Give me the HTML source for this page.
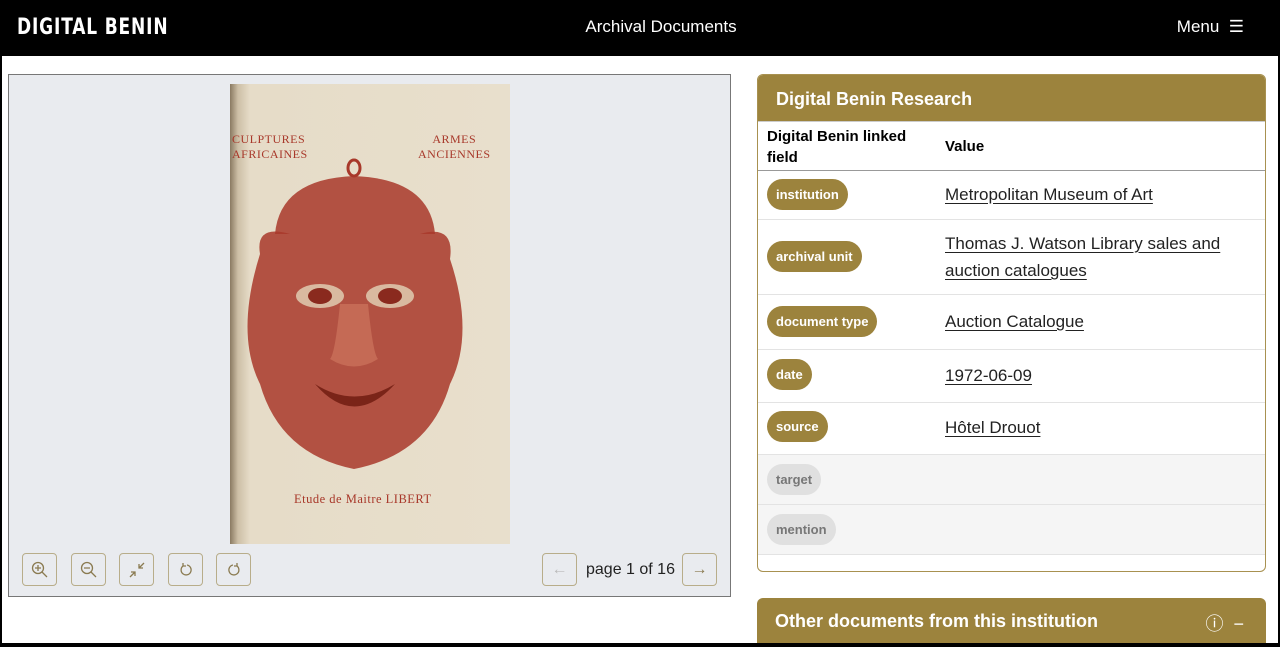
<!DOCTYPE html>
<html><head><meta charset="utf-8"><style>
*{box-sizing:border-box;margin:0;padding:0}
html,body{width:1280px;height:647px;overflow:hidden}
body{background:#000;font-family:"Liberation Sans",sans-serif;position:relative}
.page{position:absolute;left:2px;top:56px;width:1276px;height:587px;background:#fff}
.nav{position:absolute;left:0;top:0;width:1280px;height:56px;background:#000;color:#fff}
.logo{position:absolute;left:17px;top:15px;font-weight:bold;font-size:22px;letter-spacing:1px;font-family:"DejaVu Sans Condensed","Liberation Sans",sans-serif;transform:scaleX(.86);transform-origin:left}
.title{position:absolute;left:0;width:1322px;text-align:center;top:17px;font-size:17px}
.menu{position:absolute;right:36px;top:17px;font-size:17px}
.viewer{position:absolute;left:8px;top:74px;width:723px;height:523px;background:#e9ebef;border:1px solid #777}
.img{position:absolute;left:221px;top:9px;width:280px;height:460px;background:linear-gradient(90deg,#8a7a62 0,#cdbfa6 8px,#e6dcc8 20px,#e8dfcc 100%)}
.img span{position:absolute;color:#a8382a;font-family:"Liberation Serif",serif;font-size:12px;letter-spacing:.5px}
.btn{position:absolute;top:478px;width:35px;height:33px;border:1px solid #b8ad8a;border-radius:4px;display:flex;align-items:center;justify-content:center}
.card{position:absolute;left:757px;top:74px;width:509px;height:498px;border:1px solid #a89150;border-radius:6px;overflow:hidden}
.ch{height:46px;background:#9c833d;color:#fff;font-weight:bold;font-size:18px;padding:14px 18px}
.row{position:absolute;left:0;width:507px;border-bottom:1px solid #e3e3e3}
.pill{position:absolute;left:9px;background:#9c833d;color:#fff;font-weight:bold;font-size:13px;padding:8px 9px;border-radius:16px}
.pill.g{background:#e0e0e0;color:#777}
.val{position:absolute;left:187px;font-size:17px;color:#222;text-decoration:underline;text-underline-offset:3px;line-height:27px}
.card2{position:absolute;left:757px;top:598px;width:509px;height:45px;background:#9c833d;border-radius:6px 6px 0 0;color:#fff;font-weight:bold;font-size:18px;padding:13px 18px}
</style></head><body>
<div class="nav"><div class="logo">DIGITAL BENIN</div><div class="title">Archival Documents</div><div class="menu">Menu &nbsp;☰</div></div>
<div class="page"></div>
<div class="viewer">
<div class="img">
<span style="left:2px;top:48px">CULPTURES<br>AFRICAINES</span>
<span style="left:188px;top:48px;text-align:center">ARMES<br>ANCIENNES</span>
<svg style="position:absolute;left:0;top:0" width="280" height="460">
<ellipse cx="124" cy="84" rx="6" ry="8" fill="none" stroke="#a8382a" stroke-width="3"/>
<path d="M45 150 Q50 95 124 92 Q200 95 205 150 Z" fill="#a8382a" opacity=".85"/>
<path d="M30 170 Q25 140 60 150 L190 150 Q225 140 220 175 Q245 250 220 300 Q200 370 124 385 Q50 370 30 300 Q5 250 30 170Z" fill="#a8382a" opacity=".85"/>
<ellipse cx="90" cy="212" rx="24" ry="12" fill="#d9b9a0"/>
<ellipse cx="160" cy="212" rx="24" ry="12" fill="#d9b9a0"/>
<ellipse cx="90" cy="212" rx="12" ry="8" fill="#8a2a1e"/>
<ellipse cx="160" cy="212" rx="12" ry="8" fill="#8a2a1e"/>
<path d="M110 220 Q105 270 100 275 Q124 290 148 275 Q143 270 138 220Z" fill="#c56a55"/>
<path d="M85 300 Q124 325 165 300 Q124 345 85 300Z" fill="#7a2418"/>
</svg>
<span style="left:64px;top:408px;font-size:12.5px">Etude de Maitre LIBERT</span>
</div>
<div class="btn" style="left:13px"><svg width="18" height="18" fill="none" stroke="#8a7a50" stroke-width="1.3"><circle cx="7" cy="7" r="5.5"/><path d="M11 11l5 5M7 4v6M4 7h6"/></svg></div>
<div class="btn" style="left:62px"><svg width="18" height="18" fill="none" stroke="#8a7a50" stroke-width="1.3"><circle cx="7" cy="7" r="5.5"/><path d="M11 11l5 5M4 7h6"/></svg></div>
<div class="btn" style="left:110px"><svg width="18" height="18" fill="none" stroke="#8a7a50" stroke-width="1.3"><path d="M16 2l-5 5M11 3v4h4M2 16l5-5M3 11h4v4"/></svg></div>
<div class="btn" style="left:159px"><svg width="16" height="16" fill="none" stroke="#8a7a50" stroke-width="1.3"><path d="M5 4a5 5 0 1 0 4-1M5 1v3h3"/></svg></div>
<div class="btn" style="left:207px"><svg width="16" height="16" fill="none" stroke="#8a7a50" stroke-width="1.3"><path d="M11 4a5 5 0 1 1-4-1M11 1v3H8"/></svg></div>
<div class="btn" style="left:533px;color:#bbb;font-size:16px">←</div>
<div style="position:absolute;left:577px;top:486px;font-size:16px;color:#222">page 1 of 16</div>
<div class="btn" style="left:673px;color:#8a7a50;font-size:16px">→</div>
</div>
<div class="card">
<div class="ch">Digital Benin Research</div>
<div class="row" style="top:46px;height:50px;border-bottom:1px solid #999;border-top:1px solid #ccc"><div style="position:absolute;left:9px;top:4px;font-weight:bold;font-size:15px;line-height:21px">Digital Benin linked<br>field</div><div style="position:absolute;left:187px;top:16px;font-weight:bold;font-size:15px">Value</div></div>
<div class="row" style="top:96px;height:49px"><div class="pill" style="top:8px">institution</div><div class="val" style="top:10px">Metropolitan Museum of Art</div></div>
<div class="row" style="top:145px;height:75px"><div class="pill" style="top:21px">archival unit</div><div class="val" style="top:10px">Thomas J. Watson Library sales and<br>auction catalogues</div></div>
<div class="row" style="top:220px;height:55px"><div class="pill" style="top:11px">document type</div><div class="val" style="top:13px">Auction Catalogue</div></div>
<div class="row" style="top:275px;height:53px"><div class="pill" style="top:9px">date</div><div class="val" style="top:12px">1972-06-09</div></div>
<div class="row" style="top:328px;height:52px"><div class="pill" style="top:8px">source</div><div class="val" style="top:11px">Hôtel Drouot</div></div>
<div class="row" style="top:380px;height:50px;background:#f5f5f5"><div class="pill g" style="top:9px">target</div></div>
<div class="row" style="top:430px;height:50px;background:#f5f5f5"><div class="pill g" style="top:9px">mention</div></div>
</div>
<div class="card2">Other documents from this institution<span style="position:absolute;right:22px;top:12px;font-weight:normal">ⓘ&nbsp; −</span></div>
</body></html>
